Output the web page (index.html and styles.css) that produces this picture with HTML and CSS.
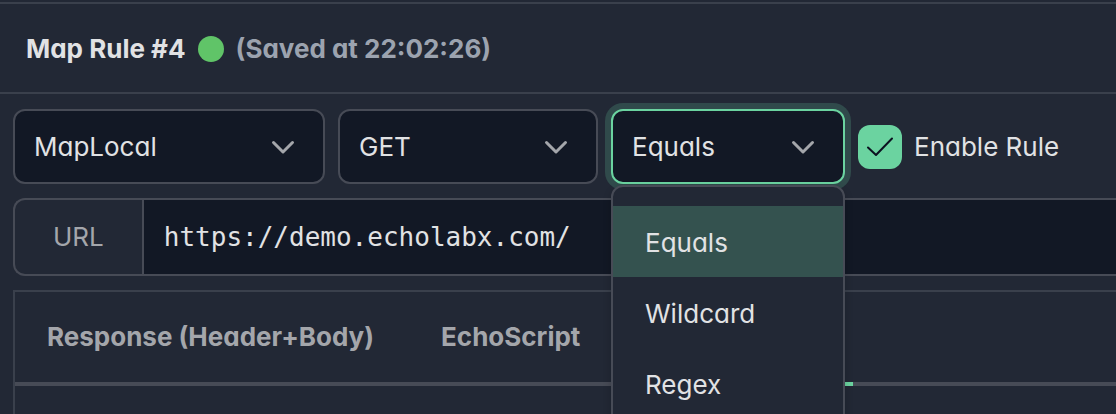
FILE: index.html
```html
<!DOCTYPE html>
<html lang="en">
<head>
<meta charset="utf-8">
<title>Map Rule #4</title>
<link rel="stylesheet" href="styles.css">
</head>
<body>
<header class="rule-header">
  <h1 class="rule-title">Map Rule #4</h1>
  <span class="status-dot"></span>
  <span class="saved-at">(Saved at 22:02:26)</span>
</header>
<main class="editor">
  <div class="toolbar">
    <div class="dropdown dropdown-kind">
      <select class="dropdown-select" aria-label="MapLocal"><option>MapLocal</option></select>
      <svg class="chevron" viewBox="0 0 28 28"><path d="M4.500 9.500 14 19 23.500 9.500"/></svg>
    </div>
    <div class="dropdown dropdown-method">
      <select class="dropdown-select" aria-label="GET"><option>GET</option></select>
      <svg class="chevron" viewBox="0 0 28 28"><path d="M4.500 9.500 14 19 23.500 9.500"/></svg>
    </div>
    <div class="dropdown dropdown-match">
      <select class="dropdown-select is-open" aria-label="Equals"><option>Equals</option><option>Wildcard</option><option>Regex</option></select>
      <svg class="chevron" viewBox="0 0 28 28"><path d="M4.500 9.500 14 19 23.500 9.500"/></svg>
      <ul class="menu" role="listbox">
        <li class="menu-item is-selected" role="option" aria-selected="true">Equals</li>
        <li class="menu-item" role="option">Wildcard</li>
        <li class="menu-item" role="option">Regex</li>
      </ul>
    </div>
    <label class="enable">
      <span class="check">
        <input class="check-input" type="checkbox" checked>
        <svg class="check-mark" viewBox="0 0 28 28"><path d="M2 14.500 10 22 26 5.500"/></svg>
      </span>
      Enable Rule
    </label>
  </div>
  <div class="url-row">
    <label class="url-label" for="url">URL</label>
    <input class="url-input" id="url" type="text" value="https://demo.echolabx.com/" spellcheck="false">
  </div>
  <section class="panel">
    <nav class="tabs">
      <button class="tab" type="button">Response (Header+Body)</button>
      <button class="tab" type="button">EchoScript</button>
      <span class="tab-active-line"></span>
    </nav>
  </section>
</main>
</body>
</html>
```
FILE: styles.css
```css
* {
  box-sizing: border-box;
}

:root {
  --bg: #222835;
  --field: #121825;
  --line: #474b56;
  --line-soft: #3a404c;
  --text: #e1e2e4;
  --muted: #a4a6ab;
  --accent: #6bd3a0;
  --highlight: #34524f;
  --radius: 12px;
}

html,
body {
  height: 100%;
}

body {
  margin: 0;
  padding-top: 2px;
  overflow: hidden;
  display: flex;
  flex-direction: column;
  background: var(--bg);
  color: var(--text);
  font: 26px/32px Inter, "Liberation Sans", sans-serif;
  font-feature-settings: "cv11";
  font-optical-sizing: none;
}

button,
input,
select {
  font: inherit;
  font-feature-settings: inherit;
  color: inherit;
}

.rule-header {
  display: flex;
  align-items: center;
  gap: 12px;
  padding: 29px 26px 27px;
  border-top: 2px solid var(--line-soft);
  border-bottom: 2px solid var(--line-soft);
  font-weight: 700;
}

.rule-title {
  margin: 0;
  font-size: 26px;
  font-weight: 700;
}

.status-dot {
  width: 26px;
  height: 26px;
  border-radius: 50%;
  background: #60c468;
}

.saved-at {
  color: #9ca3af;
}

.editor {
  flex: 1;
  display: flex;
  flex-direction: column;
  gap: 14px;
  padding: 15px 0 0 13px;
}

.toolbar {
  display: flex;
  align-items: center;
  gap: 13px;
}

.dropdown {
  position: relative;
}

.dropdown-kind {
  width: 312px;
}

.dropdown-method {
  width: 260px;
}

.dropdown-match {
  width: 234px;
}

.dropdown-select {
  display: block;
  width: 100%;
  height: 75px;
  padding: 0 64px 0 19px;
  appearance: none;
  border: 2px solid var(--line);
  border-radius: var(--radius);
  background: var(--field);
  outline: none;
}

.dropdown-select.is-open {
  border-color: var(--accent);
  box-shadow: 0 0 0 6px #304a4b;
}

.chevron {
  position: absolute;
  top: 24px;
  right: 28px;
  width: 28px;
  height: 28px;
  fill: none;
  stroke: var(--muted);
  stroke-width: 3;
  stroke-linecap: round;
  stroke-linejoin: round;
  pointer-events: none;
}

.menu {
  position: absolute;
  z-index: 1;
  top: 100%;
  left: 0;
  right: 0;
  margin: 1px 0 0;
  padding: 19px 0;
  list-style: none;
  border: 2px solid var(--line);
  border-radius: var(--radius);
  background: var(--bg);
  box-shadow: 0 4px 8px rgba(0, 0, 0, 0.2);
}

.menu-item {
  padding: 21px 32px 18px;
}

.menu-item.is-selected {
  background: var(--highlight);
}

.enable {
  display: flex;
  align-items: center;
  gap: 12px;
}

.check {
  display: grid;
  place-items: center;
}

.check-input,
.check-mark {
  grid-area: 1 / 1;
}

.check-input {
  width: 44px;
  height: 44px;
  margin: 0;
  appearance: none;
  border-radius: var(--radius);
  background: var(--accent);
}

.check-mark {
  width: 28px;
  height: 28px;
  fill: none;
  stroke: #0c1220;
  stroke-width: 2;
  stroke-linecap: round;
  stroke-linejoin: round;
  pointer-events: none;
}

.url-row {
  display: flex;
  height: 78px;
  border: 2px solid var(--line);
  border-right: 0;
  border-radius: var(--radius) 0 0 var(--radius);
  overflow: hidden;
}

.url-label {
  display: flex;
  align-items: center;
  padding: 0 38px;
  border-right: 2px solid var(--line);
  color: var(--muted);
}

.url-input {
  flex: 1;
  min-width: 0;
  padding: 0 20px;
  border: 0;
  outline: none;
  background: var(--field);
  font-family: "DejaVu Sans Mono", monospace;
}

.panel {
  flex: 1;
  border: 2px solid var(--line-soft);
  border-width: 2px 0 0 2px;
}

.tabs {
  display: flex;
  gap: 3px;
  border-bottom: 4px solid var(--line);
}

.tab {
  padding: 29px 32px;
  border: 0;
  background: none;
  color: var(--muted);
  font-weight: 700;
}

.tab-active-line {
  width: 238px;
  margin-bottom: -4px;
  border-bottom: 4px solid var(--accent);
}
```
